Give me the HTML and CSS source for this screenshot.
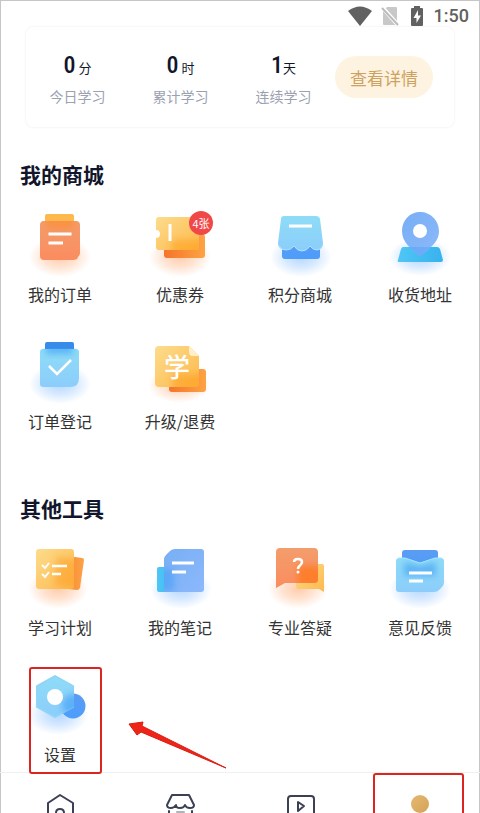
FILE: index.html
```html
<!DOCTYPE html>
<html lang="zh-CN">
<head>
<meta charset="utf-8">
<meta name="viewport" content="width=device-width, initial-scale=1">
<title>我的</title>
<link rel="stylesheet" href="styles.css">
</head>
<body>
<svg class="defs" width="0" height="0" aria-hidden="true">
  <defs>
    <linearGradient id="orange" x1="0" y1="0" x2="0" y2="1"><stop offset="0" stop-color="#f39d6c"/><stop offset="1" stop-color="#fb8c5f"/></linearGradient>
    <linearGradient id="amber" x1="0" y1="0" x2="1" y2="1"><stop offset="0" stop-color="#fddc8c"/><stop offset="1" stop-color="#fdb84c"/></linearGradient>
    <linearGradient id="deep" x1="0" y1="0" x2="1" y2="0"><stop offset="0" stop-color="#f5742b"/><stop offset="1" stop-color="#fda344"/></linearGradient>
    <linearGradient id="sky" x1="0" y1="0" x2="0" y2="1"><stop offset="0" stop-color="#8edcf7"/><stop offset="1" stop-color="#8ccdfb"/></linearGradient>
    <linearGradient id="blue" x1="0" y1="0" x2="0" y2="1"><stop offset="0" stop-color="#5a9cf3"/><stop offset="1" stop-color="#4d9dfb"/></linearGradient>
    <linearGradient id="peri" x1="0" y1="0" x2="1" y2="1"><stop offset="0" stop-color="#78aff5"/><stop offset="1" stop-color="#8cb8fb"/></linearGradient>
    <linearGradient id="cyan" x1="0" y1="0" x2="1" y2="0"><stop offset="0" stop-color="#4fc6f5"/><stop offset="1" stop-color="#38b2ee"/></linearGradient>
    <linearGradient id="gold" x1="0" y1="0" x2="1" y2="1"><stop offset="0" stop-color="#e6b96f"/><stop offset="1" stop-color="#d4a259"/></linearGradient>
    <radialGradient id="warm"><stop offset="0" stop-color="#ff9a5a" stop-opacity=".5"/><stop offset=".5" stop-color="#ff9a5a" stop-opacity=".28"/><stop offset="1" stop-color="#ff9a5a" stop-opacity="0"/></radialGradient>
    <radialGradient id="cool"><stop offset="0" stop-color="#5aa5ff" stop-opacity=".45"/><stop offset=".5" stop-color="#5aa5ff" stop-opacity=".25"/><stop offset="1" stop-color="#5aa5ff" stop-opacity="0"/></radialGradient>
    <filter id="soft" x="-40%" y="-40%" width="180%" height="180%"><feGaussianBlur stdDeviation="3"/></filter>
    <clipPath id="c-order"><rect x="12" y="14" width="40" height="39" rx="4"/></clipPath>
    <clipPath id="c-coupon"><rect x="8" y="10" width="43" height="33" rx="3"/></clipPath>
    <clipPath id="c-upgrade"><rect x="7" y="12" width="44" height="41" rx="4"/></clipPath>
    <clipPath id="c-plan"><rect x="8" y="9" width="38" height="40" rx="3"/></clipPath>
    <clipPath id="c-note"><rect x="16" y="9" width="40" height="43" rx="3"/></clipPath>
    <clipPath id="c-ask"><rect x="8" y="8" width="42" height="35" rx="3"/></clipPath>
    <clipPath id="c-hex"><path d="M27 8 46 19V40L27 51 8 40V19Z"/></clipPath>
  </defs>
</svg>

<header class="status">
  <svg width="24" height="20" viewBox="0 0 24 20" aria-label="Wi-Fi"><path d="M12 20 0 5Q12-4 24 5Z" fill="#616161"/></svg>
  <svg class="sim" width="18" height="20" viewBox="0 0 18 20" aria-label="无 SIM 卡"><path d="M6 1H15Q16 1 16 2V18Q16 19 15 19H3Q2 19 2 18V5Z" fill="#c8c8c8"/><path d="M1 1 17 19" stroke="#fff" stroke-width="4"/><path d="M1 2 17 19" stroke="#bcbcbc" stroke-width="2"/></svg>
  <svg class="battery" width="14" height="20" viewBox="0 0 14 20" aria-label="充电中"><path d="M4 0H10V2H12Q13 2 13 3V19Q13 20 12 20H2Q1 20 1 19V3Q1 2 2 2H4Z" fill="#616161"/><path d="M8 4 3.500 12H6.500V17L11 9.500H8Z" fill="#fff"/></svg>
  <time>1:50</time>
</header>

<main>
  <section class="card">
    <dl class="stats">
      <div><dd><b>0</b> 分</dd><dt>今日学习</dt></div>
      <div><dd><b>0</b> 时</dd><dt>累计学习</dt></div>
      <div><dd><b>1</b>天</dd><dt>连续学习</dt></div>
    </dl>
    <button class="detail" type="button">查看详情</button>
  </section>

  <section class="group">
    <h2>我的商城</h2>
    <div class="grid">
      <a class="item" href="#orders">
        <svg class="icon" viewBox="0 0 64 64" aria-hidden="true"><ellipse cx="32" cy="50" rx="31" ry="20" fill="url(#warm)"/><rect x="17" y="7" width="29" height="14" rx="2" fill="#fdb94e"/><path d="M16 14H48Q52 14 52 18V46Q52 48 50 50L49 52Q47 53 45 53H16Q12 53 12 49V18Q12 14 16 14Z" fill="url(#orange)"/><g clip-path="url(#c-order)"><rect x="18" y="8" width="28" height="13" fill="#ff8b27" opacity=".6" filter="url(#soft)"/></g><path d="M20.500 27H43.500M20.500 36H35" stroke="#fff" stroke-width="3"/></svg>
        <span>我的订单</span>
      </a>
      <a class="item" href="#coupons">
        <svg class="icon" viewBox="0 0 64 64" aria-hidden="true"><ellipse cx="32" cy="50" rx="31" ry="20" fill="url(#warm)"/><rect x="16" y="27" width="41" height="24" rx="3" fill="url(#deep)"/><path d="M11 10H48Q51 10 51 13V40Q51 43 48 43H11Q8 43 8 40V31Q12 31 12 27T8 23V13Q8 10 11 10Z" fill="url(#amber)"/><g clip-path="url(#c-coupon)"><rect x="24" y="33" width="35" height="18" fill="#ff9d18" opacity=".5" filter="url(#soft)"/></g><path d="M22 17V34" stroke="#fff" stroke-width="3"/></svg>
        <em class="badge">4张</em>
        <span>优惠券</span>
      </a>
      <a class="item" href="#points">
        <svg class="icon" viewBox="0 0 64 64" aria-hidden="true"><ellipse cx="33" cy="50" rx="31" ry="20" fill="url(#cool)"/><path d="M14 35H52V49Q52 52 49 52H17Q14 52 14 49Z" fill="url(#blue)"/><path d="M16 9H48Q51 9 52 12L55 36Q55 43 49 43 45 43 42 39 39 44 34 44 29 44 26 39 23 43 18 43 10 43 10 36L13 12Q13 9 16 9Z" fill="url(#sky)"/><path d="M11 39Q13 43 18 43 23 43 26 39 29 44 34 44 39 44 42 39 45 43 49 43 53 43 55 38" fill="none" stroke="#a9e6ff" stroke-width="1"/><path d="M21 19H44" stroke="#fff" stroke-width="3"/></svg>
        <span>积分商城</span>
      </a>
      <a class="item" href="#address">
        <svg class="icon" viewBox="0 0 64 64" aria-hidden="true"><ellipse cx="32" cy="50" rx="31" ry="19" fill="url(#cool)"/><path d="M15 40H49Q51 40 52 42L55 53Q55 55 53 55H11Q9 55 10 53L13 42Q14 40 15 40Z" fill="url(#cyan)"/><path d="M32 5C42 5 51 13 51 24 51 36 40 42 34 48Q32 50 30 48C24 42 14 36 14 24 14 13 22 5 32 5Z" fill="url(#peri)"/><path d="M21 40H43Q37 44 34 48 32 50 30 48 27 44 21 40Z" fill="#3f98f5" opacity=".35"/><circle cx="32" cy="24" r="7" fill="#fff"/></svg>
        <span>收货地址</span>
      </a>
      <a class="item" href="#register">
        <svg class="icon" viewBox="0 0 64 64" aria-hidden="true"><ellipse cx="32" cy="50" rx="31" ry="20" fill="url(#cool)"/><rect x="17" y="8" width="29" height="14" rx="2" fill="#388bea"/><path d="M15 15H48Q51 15 51 18V44Q51 53 42 53H15Q12 53 12 50V18Q12 15 15 15Z" fill="url(#sky)"/><g clip-path="url(#c-order)"><rect x="18" y="9" width="27" height="11" fill="#3b9cf5" opacity=".6" filter="url(#soft)"/></g><path d="M21 32 29 40 43 26" fill="none" stroke="#fff" stroke-width="2.500"/></svg>
        <span>订单登记</span>
      </a>
      <a class="item" href="#upgrade">
        <svg class="icon" viewBox="0 0 64 64" aria-hidden="true"><ellipse cx="31" cy="51" rx="31" ry="18" fill="url(#warm)"/><rect x="21" y="35" width="37" height="23" rx="3" fill="url(#deep)"/><path d="M11 12H41L51 22V49Q51 53 47 53H11Q7 53 7 49V16Q7 12 11 12Z" fill="url(#amber)"/><g clip-path="url(#c-upgrade)"><rect x="25" y="40" width="35" height="18" fill="#ff9a18" opacity=".5" filter="url(#soft)"/></g><path d="M41 12 51 22H45Q41 22 41 18Z" fill="#fff0c9"/><text class="glyph" x="29" y="43" text-anchor="middle">学</text></svg>
        <span>升级/退费</span>
      </a>
    </div>
  </section>

  <section class="group tools">
    <h2>其他工具</h2>
    <div class="grid">
      <a class="item" href="#plan">
        <svg class="icon" viewBox="0 0 64 64" aria-hidden="true"><ellipse cx="30" cy="49" rx="30" ry="20" fill="url(#warm)"/><path d="M26 14 54 18Q56 18 56 20L52 48Q51 50 49 50L24 47Z" fill="url(#deep)"/><rect x="8" y="9" width="38" height="40" rx="3" fill="url(#amber)"/><g clip-path="url(#c-plan)"><path d="M29 17 56 20 51 49 27 45Z" fill="#ff9c22" opacity=".5" filter="url(#soft)"/></g><path d="M14 25 17 28 21 23M14 34 17 37 21 32" fill="none" stroke="#fff" stroke-width="2"/><path d="M24 26H39M24 34H33" stroke="#fff" stroke-width="2.500"/></svg>
        <span>学习计划</span>
      </a>
      <a class="item" href="#notes">
        <svg class="icon" viewBox="0 0 64 64" aria-hidden="true"><ellipse cx="33" cy="49" rx="31" ry="20" fill="url(#cool)"/><rect x="9" y="27" width="24" height="25" rx="2" fill="url(#cyan)"/><path d="M27 9H53Q56 9 56 12V49Q56 52 53 52H19Q16 52 16 49V19Q16 17 18 15L22 11Q24 9 27 9Z" fill="url(#peri)"/><g clip-path="url(#c-note)"><rect x="10" y="29" width="16" height="22" fill="#399bf5" opacity=".5" filter="url(#soft)"/></g><path d="M24 23H46M24 32H38" stroke="#fff" stroke-width="3"/></svg>
        <span>我的笔记</span>
      </a>
      <a class="item" href="#questions">
        <svg class="icon" viewBox="0 0 64 64" aria-hidden="true"><ellipse cx="30" cy="49" rx="30" ry="20" fill="url(#warm)"/><path d="M30 24H54Q56 24 56 26V52L51 49H31Q28 49 28 46V26Z" fill="url(#amber)"/><path d="M12 8H46Q50 8 50 12V39Q50 43 46 43H17L8 48V12Q8 8 12 8Z" fill="url(#orange)"/><g clip-path="url(#c-ask)"><rect x="30" y="26" width="24" height="21" fill="#ff7714" opacity=".7" filter="url(#soft)"/></g><path d="M26 22Q26 19 30 19T34 22Q34 24 32 25.500 30 27 30 29" fill="none" stroke="#fff" stroke-width="2.500"/><circle cx="30" cy="32" r="1.500" fill="#fff"/></svg>
        <span>专业答疑</span>
      </a>
      <a class="item" href="#feedback">
        <svg class="icon" viewBox="0 0 64 64" aria-hidden="true"><ellipse cx="32" cy="49" rx="31" ry="20" fill="url(#cool)"/><rect x="14" y="10" width="36" height="30" rx="3" fill="url(#blue)"/><path d="M11 18 17 18 32 23 47 18 53 18Q56 18 56 21V42Q56 45 54 47L51 50Q49 52 46 52H11Q8 52 8 49V21Q8 18 11 18Z" fill="url(#sky)"/><path d="M16 22 32 26 48 22V36H16Z" fill="#3d9cf3" opacity=".6" filter="url(#soft)"/><path d="M10 18 17 18 32 23 47 18 54 18" fill="none" stroke="#a5e5ff" stroke-width="1"/><path d="M21 33H44M21 41H35" stroke="#fff" stroke-width="3"/></svg>
        <span>意见反馈</span>
      </a>
      <a class="item" href="#settings">
        <svg class="icon" viewBox="0 0 64 64" aria-hidden="true"><ellipse cx="30" cy="48" rx="30" ry="20" fill="url(#cool)"/><circle cx="45" cy="39" r="12.500" fill="url(#blue)"/><path d="M27 9 45 19V40L27 50 9 40V19Z" fill="url(#sky)" stroke="#8ed5f9" stroke-width="2" stroke-linejoin="round"/><g clip-path="url(#c-hex)"><circle cx="45" cy="38" r="11" fill="#3c9af6" opacity=".6" filter="url(#soft)"/></g><circle cx="27" cy="30" r="8" fill="#fff"/></svg>
        <span>设置</span>
        <i class="mark mark-item"></i>
        <svg class="arrow" viewBox="0 0 105 52" aria-hidden="true"><path d="M4 5 18 3 17 7 101 49 16 13 12 16Z" fill="#ee2419" stroke="#d91c12" stroke-width="1" stroke-linejoin="round"/></svg>
      </a>
    </div>
  </section>
</main>

<nav class="tabs">
  <a href="#home" aria-label="首页"><svg viewBox="0 0 32 32"><path d="M4 10 16 2 29 10V29H4Z"/><path d="M12 24V20Q12 16 16 16T20 20V24"/></svg></a>
  <a href="#shop" aria-label="商城"><svg viewBox="0 0 32 32"><path d="M8 2H25L30 12Q30 15 26 15 22 15 21 12 20 15 16 15T12 12Q10 15 7 15 3 15 3 12Z"/><path d="M5 18V29H28V18"/><path d="M13 19H20" stroke-opacity=".4"/></svg></a>
  <a href="#course" aria-label="课程"><svg viewBox="0 0 32 32"><rect x="4" y="3" width="26" height="26" rx="3"/><path d="M14 9 20 13 14 18Z"/></svg></a>
  <a href="#me" aria-label="我的" aria-current="page"><svg viewBox="0 0 32 32"><circle class="fill" cx="16" cy="11" r="9"/><path class="fill" d="M4 32Q4 23 16 23T29 32Z"/></svg><i class="mark mark-tab"></i></a>
</nav>
</body>
</html>
```
FILE: styles.css
```css
* { box-sizing: border-box; }

body {
  height: 100vh;
  margin: 0;
  overflow: hidden;
  background: #fff;
  box-shadow: inset 1px 1px #c6c6c6, inset -1px 0 #c6c6c6;
  color: #333;
  font-family: "Noto Sans CJK SC", "Noto Sans", sans-serif;
}

a { color: inherit; text-decoration: none; }

.defs { position: absolute; }

.status {
  display: flex;
  align-items: center;
  justify-content: flex-end;
  height: 26px;
  padding: 6px 11px 0 0;
  color: #616161;
  font: 500 18px/20px Roboto, sans-serif;
}
.sim { margin-left: 9px; }
.battery { margin: 0 10px 0 11px; }

.card {
  display: flex;
  align-items: center;
  height: 100px;
  margin: 1px 26px 0;
  padding-right: 21px;
  border-radius: 8px;
  box-shadow: 0 0 3px #ececef;
}
.stats {
  display: flex;
  flex: 1;
  margin: 0;
}
.stats div {
  display: flex;
  flex: 1;
  flex-direction: column;
  text-align: center;
}
.stats dt { color: #9ca1b1; font-size: 14px; line-height: 20px; }
.stats dd {
  margin: 3px 0 4px;
  color: #12162c;
  font-size: 13px;
  line-height: 28px;
}
.stats b {
  font-family: "Liberation Sans Narrow", "Roboto Condensed", Roboto, sans-serif;
  font-size: 24px;
  font-weight: 500;
}
.detail {
  height: 42px;
  padding: 0 15px;
  border: 0;
  border-radius: 21px;
  background: #fdf3e0;
  color: #cda15f;
  font-family: inherit;
  font-size: 17px;
}

.group { padding-top: 31px; }
.tools { padding-top: 59px; }
.group h2 {
  margin: 0 20px 17px;
  color: #12162c;
  font-size: 21px;
  font-weight: 700;
  line-height: 32px;
}
.tools h2 { margin-bottom: 16px; }
.grid {
  display: grid;
  grid-template-columns: repeat(4, 1fr);
  row-gap: 28px;
}
.item {
  position: relative;
  display: flex;
  flex-direction: column;
  align-items: center;
  gap: 11px;
  font-size: 16px;
  line-height: 24px;
}
.icon { width: 64px; height: 64px; overflow: visible; }
.item span { position: relative; }
.glyph { fill: #fff; font-size: 26px; font-weight: 500; }

.badge {
  position: absolute;
  top: 4px;
  left: calc(50% + 9px);
  width: 24px;
  height: 24px;
  border-radius: 50%;
  background: #f04848;
  color: #fff;
  font-size: 11px;
  font-style: normal;
  text-align: center;
}

.mark {
  position: absolute;
  border: 2px solid #dc2420;
  border-radius: 3px;
}
.mark-item { inset: 0 18px -8px 29px; }
.mark-tab { inset: 0 16px -10px 13px; }
.arrow {
  position: absolute;
  top: 52px;
  left: 125px;
  width: 105px;
  height: 52px;
}

.tabs {
  display: grid;
  grid-template-columns: repeat(4, 1fr);
  margin-top: 6px;
  border-top: 1px solid #f0f0f0;
}
.tabs a {
  position: relative;
  display: flex;
  justify-content: center;
  padding: 20px 0 12px;
}
.tabs svg {
  width: 32px;
  height: 32px;
  fill: none;
  stroke: #3c4054;
  stroke-width: 2;
  stroke-linejoin: round;
  stroke-linecap: round;
}
.tabs .fill { fill: url(#gold); stroke: none; }
```
